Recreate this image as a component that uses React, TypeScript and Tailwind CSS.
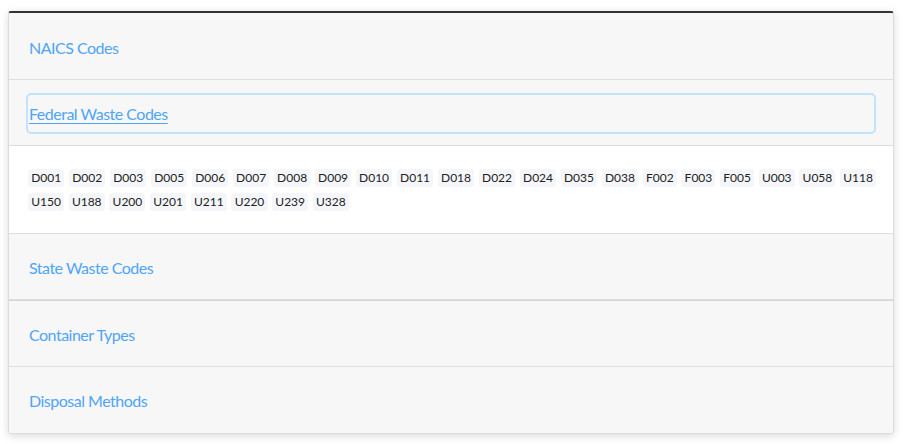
import React from "react";

const codes = [
  "D001","D002","D003","D005","D006","D007","D008","D009","D010","D011","D018","D022","D024","D035","D038","F002","F003","F005","U003","U058","U118",
  "U150","U188","U200","U201","U211","U220","U239","U328",
];

function Header({ title, focused, last, tall }: { title: string; focused?: boolean; last?: boolean; tall?: boolean }) {
  return (
    <div className={"flex items-center px-[17px] bg-[#f7f7f7] " + (tall ? "h-[67px] pt-[3px] " : "h-[66px] pt-[1px] ") + (last ? "" : "border-b border-[#dedede]")}>
      <div
        className={
          "w-full h-[41px] flex items-center px-[1px] rounded-[5px] border-2 " +
          (focused ? "border-[#c2e3f9]" : "border-transparent")
        }
      >
        <span className={"text-[16px] tracking-[-0.5px] text-[#4ea5f6] pt-[1px] " + (focused ? "underline underline-offset-[3px]" : "")}>{title}</span>
      </div>
    </div>
  );
}

export default function App() {
  return (
    <div className="w-[903px] h-[444px] bg-white pt-[11px] pl-[8px]" style={{ fontFamily: "Lato, 'Noto Sans', sans-serif" }}>
      <div className="w-[886px] rounded-[3px] border-t-2 border-t-[#333] border-x border-b border-[#dcdcdc] shadow-[0_2px_8px_rgba(0,0,0,0.15)] overflow-hidden">
        <Header title="NAICS Codes" tall />
        <Header title="Federal Waste Codes" focused />
        <div className="bg-white pl-[19px] pr-[12px] pt-[23px] pb-[22px] border-b border-[#dedede] flex flex-wrap gap-x-[4.6px] gap-y-[6px]">
          {codes.map((c) => (
            <span key={c} className="h-[18px] px-[3.2px] flex items-center rounded-[3px] bg-[#f4f6f9] text-[12px] text-[#222]">
              {c}
            </span>
          ))}
        </div>
        <div className="border-b border-[#d4d4d4]">
          <Header title="State Waste Codes" />
        </div>
        <Header title="Container Types" />
        <Header title="Disposal Methods" last />
      </div>
    </div>
  );
}
